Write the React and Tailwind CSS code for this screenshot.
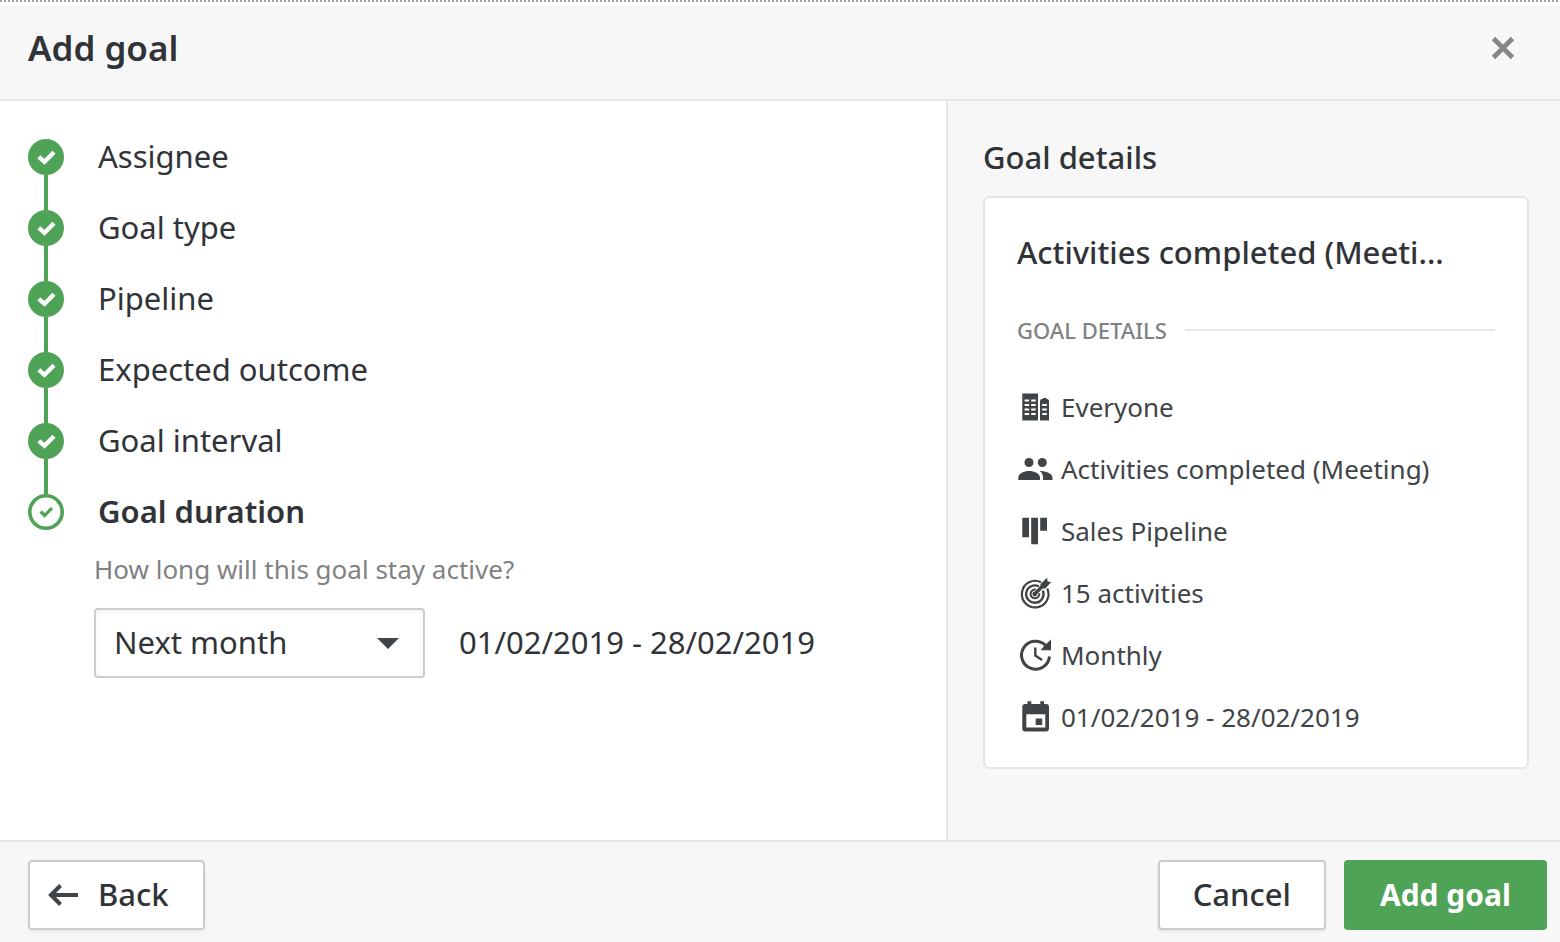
import React from "react";

const STEPS = ["Assignee", "Goal type", "Pipeline", "Expected outcome", "Goal interval"];

const WINDOW_ROWS = [9.5, 14, 18.5, 23];

function StepMark({ current }) {
  return (
    <svg viewBox="0 0 36 36" className="size-9 shrink-0" aria-hidden="true">
      {current ? (
        <>
          <circle cx="18" cy="18" r="16.200" fill="#fff" stroke="#4fa356" strokeWidth="3.600" />
          <path d="M12.600 17.500 16.600 21.500 24 14" fill="none" stroke="#4fa356" strokeWidth="3.200" />
        </>
      ) : (
        <>
          <circle cx="18" cy="18" r="18" fill="#4fa356" />
          <path d="M10.800 17.800 16.500 22.800 26 13.200" fill="none" stroke="#fff" strokeWidth="4.400" />
        </>
      )}
    </svg>
  );
}

function Icon({ children }) {
  return (
    <svg viewBox="0 0 36 36" className="size-9 shrink-0" fill="currentColor" aria-hidden="true">
      {children}
    </svg>
  );
}

const DETAILS = [
  {
    text: "Everyone",
    icon: (
      <Icon>
        <path d="M5.300 3.500H21v27H5.300zM23 30.500V11q0-2 2-2h1V8h3.500v1q2.500 0 2.500 2v19.500z" />
        <g fill="#fff">
          {WINDOW_ROWS.map((y) => (
            <React.Fragment key={y}>
              <rect x="7.600" y={y} width="4.500" height="2" />
              <rect x="14.200" y={y} width="4.500" height="2" />
              {y > 10 && <rect x="25.200" y={y} width="4.600" height="2" />}
            </React.Fragment>
          ))}
        </g>
      </Icon>
    ),
  },
  {
    text: "Activities completed (Meeting)",
    icon: (
      <Icon>
        <circle cx="12" cy="10.500" r="4.500" />
        <circle cx="25.300" cy="10.500" r="4.500" />
        <path d="M1.300 28v-2.400c0-4.400 5.700-6.700 10.900-6.700S23 21.200 23 25.600V28zM22.800 19c6 0 12.700 2.200 12.700 6.800V28H26v-2.400c0-3-1.200-5-3.200-6.600z" />
      </Icon>
    ),
  },
  {
    text: "Sales Pipeline",
    icon: (
      <Icon>
        <path d="M5.300 3.700H12v19.600H5.300zM14.200 3.700H21v26.600h-6.800zM23.200 3.700H30v13h-6.800z" />
      </Icon>
    ),
  },
  {
    text: "15 activities",
    icon: (
      <Icon>
        <g fill="none" stroke="currentColor" strokeWidth="2">
          <path d="M24 6.200A13.300 13.300 0 1 0 30.200 12.500" strokeWidth="2.200" />
          <path d="M22 10.400A8.700 8.700 0 1 0 25.800 14.500" strokeWidth="2.300" />
          <path d="M18.800 13.600A4.400 4.400 0 1 0 22.300 17.200" />
          <path d="M17.500 18.300 27.500 8.300" strokeWidth="3.400" />
        </g>
        <path d="M23.300 8.300 30 1.800l.6 3.700 3.700.6-6.300 6.600-4-.9z" />
        <circle cx="17.800" cy="18" r="2.400" />
      </Icon>
    ),
  },
  {
    text: "Monthly",
    icon: (
      <Icon>
        <path d="M28.500 7.300A14 14 0 1 0 32.500 18.500" fill="none" stroke="currentColor" strokeWidth="3" />
        <path d="M34 1.500v10.800H23.600L27.500 7.500z" />
        <path d="M18.300 9.500V17.500L25 22" fill="none" stroke="currentColor" strokeWidth="2.400" />
      </Icon>
    ),
  },
  {
    text: "01/02/2019 - 28/02/2019",
    icon: (
      <Icon>
        <path
          fillRule="evenodd"
          d="M10.500 1.300h3.800V4h9V1.300H27V4h2a3 3 0 0 1 3 3v21.500a3 3 0 0 1-3 3H8.300a3 3 0 0 1-3-3V7a3 3 0 0 1 3-3h2.200zM9.300 14.300v13.300h19V14.300zM18.700 18.500h6.500v6.500h-6.500z"
        />
      </Icon>
    ),
  },
];

export default function App() {
  return (
    <div className="flex min-h-screen flex-col bg-white font-['Noto_Sans','Open_Sans',sans-serif] text-[#303438]">
      <div className="h-[2px] bg-[repeating-linear-gradient(90deg,#a3a3a3_0_2px,#fff_2px_4px)]" />

      <header className="mt-1 flex h-[95px] items-center justify-between border-b-2 border-[#e6e6e6] bg-[#f7f7f7] pr-[43px] pb-[9px] pl-7">
        <h1 className="text-[35px] leading-[48px] font-semibold">Add goal</h1>
        <button type="button" aria-label="Close" className="flex size-7 items-center justify-center">
          <svg viewBox="0 0 28 28" className="size-7" aria-hidden="true">
            <path d="M4.500 4.500 23.500 23.500M23.500 4.500 4.500 23.500" stroke="#85888a" strokeWidth="4.800" />
          </svg>
        </button>
      </header>

      <div className="flex flex-1">
        <main className="min-w-0 flex-1 pt-[38px] pl-7">
          <ol>
            {STEPS.map((step) => (
              <li key={step} className="flex gap-[34px]">
                <div className="flex h-[71px] flex-col items-center">
                  <StepMark />
                  <div className="w-1 flex-1 bg-[#4fa356]" />
                </div>
                <span className="text-[31px] leading-[34px]">{step}</span>
              </li>
            ))}
            <li className="flex gap-[34px]" aria-current="step">
              <StepMark current />
              <span className="text-[31px] leading-[34px] font-semibold">Goal duration</span>
            </li>
          </ol>

          <div className="mt-[19px] pl-[66px]">
            <label htmlFor="duration" className="block text-[26px] leading-10 text-[#7f8284]">
              How long will this goal stay active?
            </label>
            <div className="mt-[19px] flex items-center gap-[34px]">
              <div className="relative w-[331px]">
                <select
                  id="duration"
                  defaultValue="next"
                  className="h-[70px] w-full appearance-none rounded-[4px] border-2 border-[#cbcccd] bg-white px-[18px] pb-[2px] text-[31px] leading-10 shadow-[inset_0_3px_4px_#0000000a]"
                >
                  <option value="this">This month</option>
                  <option value="next">Next month</option>
                </select>
                <svg viewBox="0 0 22 11" className="pointer-events-none absolute top-[30px] right-[26px] h-[11px] w-[22px]" aria-hidden="true">
                  <path d="M0 0h22L11 11z" fill="#404447" />
                </svg>
              </div>
              <span className="pb-[2px] text-[31px] leading-10">01/02/2019 - 28/02/2019</span>
            </div>
          </div>
        </main>

        <aside className="w-[614px] border-l-2 border-[#e6e6e6] bg-[#f7f7f7] pt-[36px] pr-[31px] pl-[35px]">
          <h2 className="text-[31px] leading-10 font-medium">Goal details</h2>
          <section className="mt-[19px] rounded-md border-2 border-[#e6e6e6] bg-white px-8 pt-[34px] pb-[18px]">
            <h3 className="text-[31px] leading-10 font-medium">Activities completed (Meeti...</h3>
            <div className="mt-[42px] flex items-center gap-[18px]">
              <h4 className="text-[22px] leading-8 font-medium text-[#7f8284]">GOAL DETAILS</h4>
              <div className="h-[2px] flex-1 bg-[#e6e6e6]" />
            </div>
            <ul className="mt-[31px] text-[#404447]">
              {DETAILS.map(({ text, icon }) => (
                <li key={text} className="flex h-[62px] items-center gap-2">
                  {icon}
                  <span className="pb-[2px] text-[26px] leading-9">{text}</span>
                </li>
              ))}
            </ul>
          </section>
        </aside>
      </div>

      <footer className="flex h-[102px] items-start gap-[18px] border-t-2 border-[#e6e6e6] bg-[#f7f7f7] pt-[18px] pr-[13px] pl-7">
        <button
          type="button"
          className="mr-auto flex h-[70px] items-center gap-5 rounded-[4px] border-2 border-[#cbcccd] bg-white pr-[34px] pl-[18px] text-[31px] font-medium shadow-[0_2px_3px_#0000000f]"
        >
          <svg viewBox="0 0 30 22" className="h-[22px] w-[30px]" fill="none" stroke="#404447" strokeWidth="4" aria-hidden="true">
            <path d="M30 11H3M12.500 1.500 3 11l9.500 9.500" />
          </svg>
          <span className="pb-[2px]">Back</span>
        </button>
        <button
          type="button"
          className="h-[70px] rounded-[4px] border-2 border-[#cbcccd] bg-white px-[33px] pb-[2px] text-[31px] font-medium shadow-[0_2px_3px_#0000000f]"
        >
          Cancel
        </button>
        <button type="button" className="h-[70px] rounded-[4px] bg-[#4fa356] px-9 pb-[2px] text-[30px] font-bold text-white">
          Add goal
        </button>
      </footer>
    </div>
  );
}
